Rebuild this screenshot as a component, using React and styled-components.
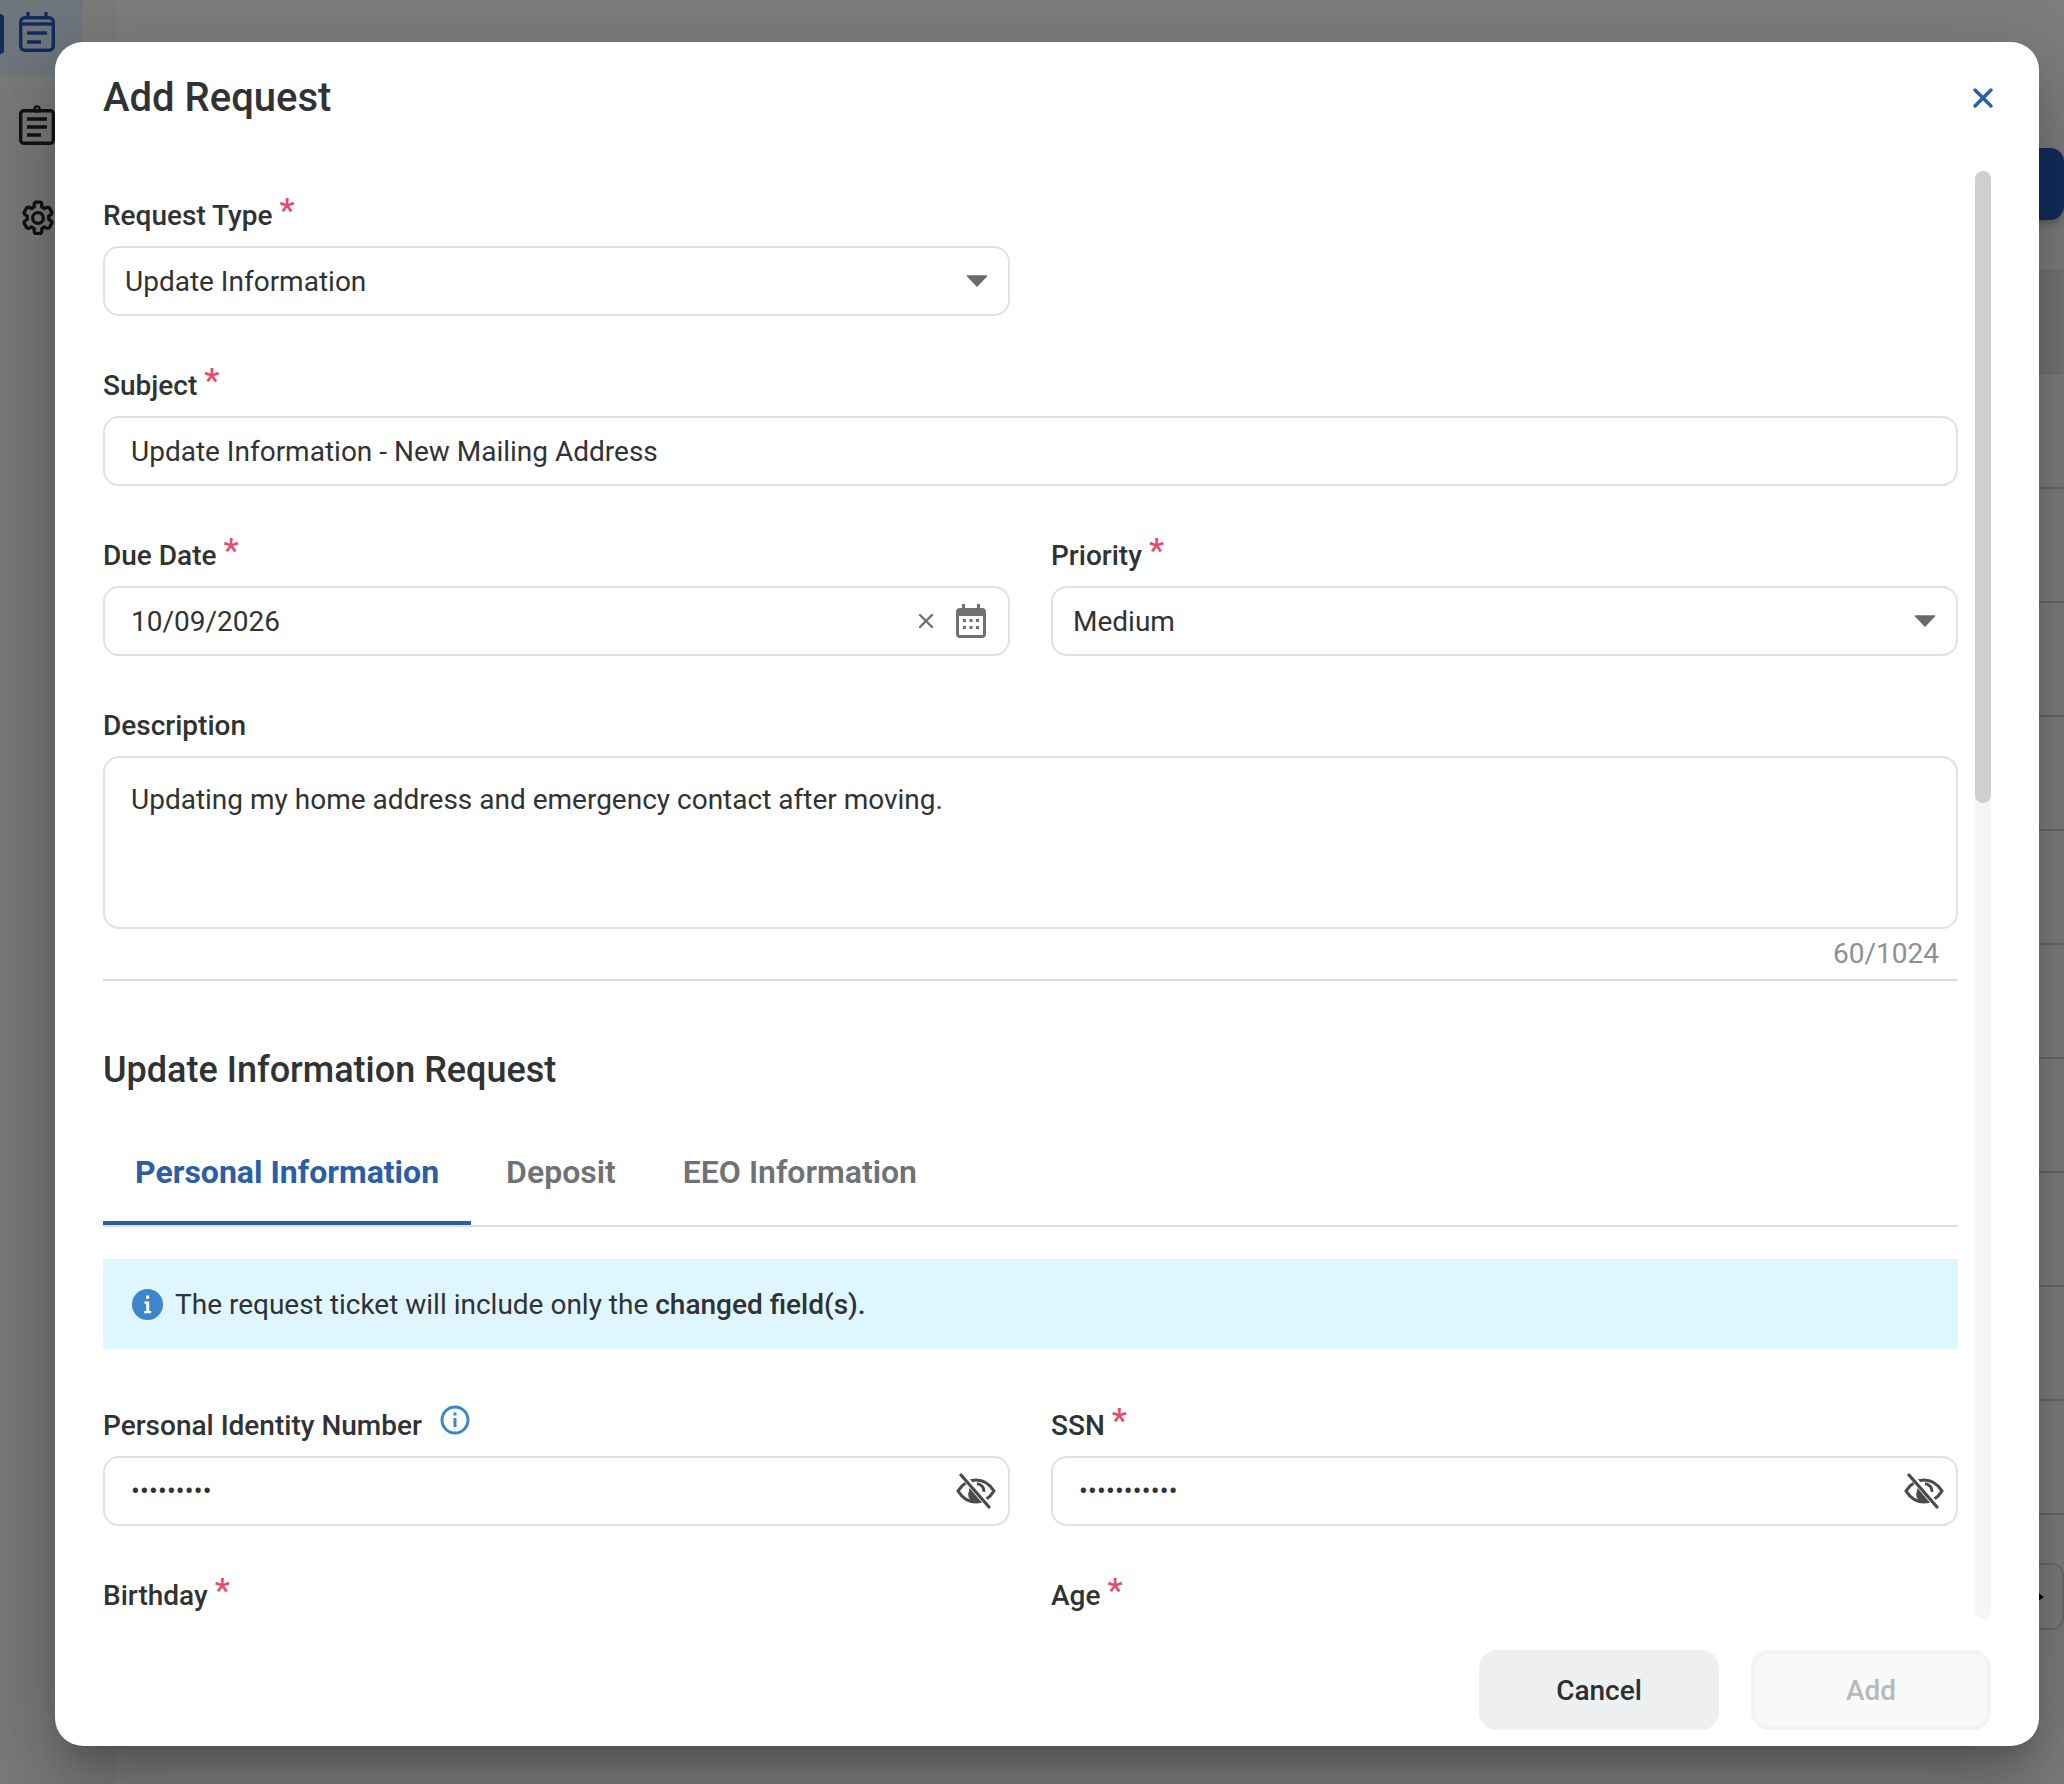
import React from 'react';
import styled, { createGlobalStyle } from 'styled-components';
import { X } from 'lucide-react';

const Global = createGlobalStyle`
  html, body { margin: 0; padding: 0; background: #fff; }
  * { box-sizing: border-box; }
  body { font-family: Roboto, "Liberation Sans", sans-serif; color: #303234; }
`;

const Page = styled.div`
  position: relative; display: flex; width: 2064px; height: 1784px; overflow: hidden; background: #fbfdfc;
`;
const Sidebar = styled.nav`
  width: 116px; flex: none; background: #f7f7f7; display: flex; flex-direction: column; gap: 5px; margin-top: -12px;
`;
const NavItem = styled.div`
  position: relative; width: 83px; height: 88px; display: flex; align-items: center; padding-left: 19px;
  background: ${p => (p.$active ? '#deedfb' : 'transparent')};
  color: ${p => (p.$active ? '#2659b8' : '#262626')};
  &::before {
    content: ''; display: ${p => (p.$active ? 'block' : 'none')}; position: absolute; left: -4px; top: 26px;
    width: 8px; height: 40px; border-radius: 4px; background: #2659b8;
  }
`;
const Main = styled.main`flex: 1; display: flex; flex-direction: column; min-width: 0;`;
const Toolbar = styled.div`height: 269px; padding-top: 148px; display: flex; justify-content: flex-end;`;
const NewButton = styled.div`width: 300px; height: 72px; border-radius: 14px; background: #285abb; box-shadow: 0 4px 8px rgba(0,0,0,.25);`;
const TableHead = styled.div`height: 106px; background: #ebedee;`;
const Row = styled.div`height: 114px; border-bottom: 2px solid #d4d4d4; background: #fff;`;
const Pager = styled.div`
  margin-top: 48px; align-self: flex-end; width: 240px; height: 67px; border: 2px solid #d8d8d8; border-radius: 12px;
  display: flex; align-items: center; justify-content: flex-end; padding-right: 18px;
`;
const PagerArrow = styled.span`
  width: 0; height: 0; border-left: 14px solid #111; border-top: 10px solid transparent; border-bottom: 10px solid transparent;
`;

const Overlay = styled.div`
  position: absolute; inset: 0; background: rgba(0,0,0,.5); display: flex; padding: 42px 25px 38px 55px;
`;
const Modal = styled.section`
  flex: 1; min-width: 0; display: flex; flex-direction: column; background: #fff; border-radius: 28px;
  box-shadow: 0 22px 30px -14px rgba(0,0,0,.2), 0 48px 76px 6px rgba(0,0,0,.14), 0 18px 92px 16px rgba(0,0,0,.12);
`;
const Header = styled.header`
  height: 129px; flex: none; display: flex; justify-content: space-between; align-items: flex-start; padding: 32px 40px 0 48px;
`;
const Title = styled.h1`margin: 0; font-size: 40px; line-height: 47px; font-weight: 500; color: #303234;`;
const CloseButton = styled.div`width: 32px; height: 47px; display: flex; align-items: center; justify-content: center; color: #2a5ea7;`;

const Body = styled.div`flex: 1; min-height: 0; display: flex; gap: 17px; padding: 0 48px;`;
const Content = styled.div`flex: 1; min-width: 0; overflow: hidden; padding-top: 25px;`;
const Track = styled.div`width: 16px; flex: none; border-radius: 8px; background: #f5f5f6;`;
const Thumb = styled.div`height: 632px; border-radius: 8px; background: #cfcfcf;`;

const Grid = styled.div`display: grid; grid-template-columns: 907px 907px; column-gap: 41px;`;
const Field = styled.div`margin-bottom: ${p => p.$mb ?? 50}px;`;
const LabelRow = styled.div`display: flex; height: 40px; margin-bottom: 10px; align-items: center;`;
const LabelText = styled.label`font-size: 28px; line-height: 40px; font-weight: 500; color: #303234;`;
const Req = styled.span`
  font-size: 34px; line-height: 34px; font-weight: 500; color: #e84a6d; margin-left: 7px; align-self: flex-start; margin-top: -3px;
`;
const InfoWrap = styled.span`margin-left: 18px; display: flex; margin-top: -12px; color: #3c86c9;`;

const Box = styled.div`
  display: flex; align-items: center; justify-content: space-between; height: 70px; border: 2px solid #e0e0e6; border-radius: 16px;
  background: #fff; padding: 0 ${p => p.$pr ?? 20}px 0 ${p => p.$pl ?? 26}px; font-size: 28px; color: #303234;
`;
const Area = styled.div`
  height: 173px; border: 2px solid #e0e0e6; border-radius: 16px; padding: 22px 26px; font-size: 28px; line-height: 40px; color: #303234;
`;
const Counter = styled.div`
  height: 40px; margin-top: 5px; padding-right: 19px; text-align: right; font-size: 28px; line-height: 40px; color: #8d9094;
`;
const Divider = styled.hr`margin: 5px 0 0; border: 0; height: 2px; background: #dcdcdc;`;
const Section = styled.h2`margin: 67px 0 35px; font-size: 36px; line-height: 44px; font-weight: 500; color: #303234;`;
const Tabs = styled.div`display: flex; gap: 3px; border-bottom: 2px solid #dedede; height: 100px;`;
const Tab = styled.div`
  height: 98px; padding: 0 32px 4px; display: flex; align-items: center; font-size: 32px; font-weight: ${p => (p.$active ? 700 : 600)};
  color: ${p => (p.$active ? '#2a5ea7' : '#6f7175')}; border-bottom: 4px solid ${p => (p.$active ? '#2a5ea7' : 'transparent')};
`;
const Banner = styled.div`
  margin: 32px 0 57px; height: 90px; background: #dff6fe; display: flex; align-items: center; gap: 12px; padding-left: 29px;
  font-size: 28px; color: #303234;
  & b { font-weight: 500; }
`;
const Dots = styled.span`font-size: 26px; letter-spacing: 0.2px; color: #303234;`;

const Footer = styled.footer`display: flex; justify-content: flex-end; gap: 32px; padding: 32px 48px 16px; flex: none;`;
const Button = styled.button`
  width: 240px; height: 80px; border-radius: 18px; font: 500 28px Roboto, sans-serif;
  background: ${p => (p.$disabled ? '#f8f9f9' : '#eeeff1')};
  color: ${p => (p.$disabled ? '#b9b9b9' : '#2d2f31')};
  border: ${p => (p.$disabled ? '4px solid #f2f3f3' : '0')};
`;

const Caret = () => (
  <svg width="22" height="12" viewBox="0 0 22 12"><path d="M1.5 1h19L11 11z" fill="#6a6a6a" stroke="#6a6a6a" strokeWidth="1.5" strokeLinejoin="round" /></svg>
);
const CalendarDoc = () => (
  <svg width="36" height="40" viewBox="0 0 36 40" fill="none" stroke="currentColor" strokeWidth="3.4" style={{ flex: 'none' }}>
    <path d="M9 0v7M27 0v7" />
    <rect x="1.7" y="5.7" width="32.6" height="32.6" rx="4" />
    <path d="M2 12h32" />
    <path d="M8 21h20M8 30h14" />
  </svg>
);
const ClipboardDoc = () => (
  <svg width="36" height="40" viewBox="0 0 36 40" fill="none" stroke="currentColor" strokeWidth="3.4" style={{ flex: 'none' }}>
    <rect x="1.7" y="5.7" width="32.6" height="32.6" rx="3" />
    <circle cx="18" cy="4" r="2.6" strokeWidth="2.4" />
    <path d="M8 14h20M8 22h20M8 30h14" />
  </svg>
);
const Gear = () => (
  <svg width="40" height="40" viewBox="0 0 24 24" fill="none" stroke="currentColor" strokeWidth="2" strokeLinejoin="round" style={{ flex: 'none', marginLeft: -1 }}>
    <path d="M9.67 4.14a2 2 0 0 1 .64-1.64h3.38a2 2 0 0 1 .64 1.64l-.1 1.2 1.63.94 1.09-.52a2 2 0 0 1 1.77.05l1.69 2.93a2 2 0 0 1-.97 1.48l-.99.69v1.88l.99.69a2 2 0 0 1 .97 1.48l-1.69 2.93a2 2 0 0 1-1.77.05l-1.09-.52-1.63.94.1 1.2a2 2 0 0 1-.64 1.64h-3.38a2 2 0 0 1-.64-1.64l.1-1.2-1.63-.94-1.09.52a2 2 0 0 1-1.77-.05l-1.69-2.93a2 2 0 0 1 .97-1.48l.99-.69v-1.88l-.99-.69a2 2 0 0 1-.97-1.48l1.69-2.93a2 2 0 0 1 1.77-.05l1.09.52 1.63-.94z" />
    <circle cx="12" cy="12" r="3.2" />
  </svg>
);
const DateIcon = () => (
  <svg width="30" height="34" viewBox="0 0 30 34" fill="#717171" style={{ display: 'block' }}>
    <path d="M6 0h3v4h12V0h3v4h2a4 4 0 0 1 4 4v22a4 4 0 0 1-4 4H4a4 4 0 0 1-4-4V8a4 4 0 0 1 4-4h2zM3 12v18a1 1 0 0 0 1 1h22a1 1 0 0 0 1-1V12z" />
    <path d="M7 15h3v3H7zM13.500 15h3v3h-3zM20 15h3v3h-3zM7 22h3v3H7zM13.500 22h3v3h-3zM20 22h3v3h-3z" />
  </svg>
);
const EyeOff = () => (
  <svg width="40" height="36" viewBox="0 0 40 36" fill="none" style={{ display: 'block' }}>
    <path d="M2 18C7 10 13 7 20 7s13 3 18 11c-5 8-11 11-18 11S7 26 2 18z" stroke="#4a4b4d" strokeWidth="3.2" strokeLinejoin="round" />
    <path d="M13 18a7.500 7.500 0 0 1 3-6l11 13a7.500 7.500 0 0 1-14-7z" fill="#4a4b4d" />
    <path d="M21 10.800a7.500 7.500 0 0 1 7 8" stroke="#4a4b4d" strokeWidth="3" />
    <path d="M6 1.500l28 33" stroke="#fff" strokeWidth="6" />
    <path d="M5 2l28 32" stroke="#4a4b4d" strokeWidth="3.200" strokeLinecap="round" />
  </svg>
);
const InfoOutline = () => (
  <svg width="30" height="30" viewBox="0 0 30 30" fill="none" style={{ display: 'block' }}>
    <circle cx="15" cy="15" r="13" stroke="currentColor" strokeWidth="3" />
    <rect x="13.500" y="13" width="3" height="9" fill="currentColor" />
    <rect x="13.500" y="7.500" width="3" height="3" fill="currentColor" />
  </svg>
);
const InfoFilled = () => (
  <svg width="31" height="31" viewBox="0 0 31 31" style={{ display: 'block', flex: 'none' }}>
    <circle cx="15.500" cy="15.500" r="15.500" fill="#3c86c9" />
    <path d="M14 6.500h3.200v3.200H14zM12.500 12.500h4.700v9.500h2v2.200h-7V22h2v-7.300h-1.700z" fill="#fff" />
  </svg>
);

const Label = ({ text, required, info }) => (
  <LabelRow>
    <LabelText>{text}</LabelText>
    {required && <Req>*</Req>}
    {info && <InfoWrap><InfoOutline /></InfoWrap>}
  </LabelRow>
);

export default function App() {
  return (
    <>
      <Global />
      <Page>
        <Sidebar>
          <NavItem $active><CalendarDoc /></NavItem>
          <NavItem><ClipboardDoc /></NavItem>
          <NavItem><Gear /></NavItem>
        </Sidebar>
        <Main>
          <Toolbar><NewButton /></Toolbar>
          <TableHead />
          {Array.from({ length: 10 }, (_, i) => <Row key={i} />)}
          <Pager><PagerArrow /></Pager>
        </Main>
        <Overlay>
          <Modal>
            <Header>
              <Title>Add Request</Title>
              <CloseButton><X size={34} strokeWidth={2.6} /></CloseButton>
            </Header>
            <Body>
              <Content>
                <Grid>
                  <Field>
                    <Label text="Request Type" required />
                    <Box $pl={20}>Update Information<Caret /></Box>
                  </Field>
                </Grid>
                <Field>
                  <Label text="Subject" required />
                  <Box>Update Information - New Mailing Address</Box>
                </Field>
                <Grid>
                  <Field>
                    <Label text="Due Date" required />
                    <Box $pr={22}>
                      10/09/2026
                      <svg width="0" height="0" style={{ marginLeft: 'auto' }} />
                      <X size={24} color="#717171" strokeWidth={2.4} style={{ marginRight: 18 }} />
                      <DateIcon />
                    </Box>
                  </Field>
                  <Field>
                    <Label text="Priority" required />
                    <Box $pl={20}>Medium<Caret /></Box>
                  </Field>
                </Grid>
                <Field $mb={0}>
                  <Label text="Description" />
                  <Area>Updating my home address and emergency contact after moving.</Area>
                  <Counter>60/1024</Counter>
                </Field>
                <Divider />
                <Section>Update Information Request</Section>
                <Tabs>
                  <Tab $active>Personal Information</Tab>
                  <Tab>Deposit</Tab>
                  <Tab>EEO Information</Tab>
                </Tabs>
                <Banner>
                  <InfoFilled />
                  <span>The request ticket will include only the <b>changed field(s).</b></span>
                </Banner>
                <Grid>
                  <Field>
                    <Label text="Personal Identity Number" info />
                    <Box $pr={12}><Dots>•••••••••</Dots><EyeOff /></Box>
                  </Field>
                  <Field>
                    <Label text="SSN" required />
                    <Box $pr={12}><Dots>•••••••••••</Dots><EyeOff /></Box>
                  </Field>
                  <Field $mb={0}><Label text="Birthday" required /></Field>
                  <Field $mb={0}><Label text="Age" required /></Field>
                </Grid>
              </Content>
              <Track><Thumb /></Track>
            </Body>
            <Footer>
              <Button>Cancel</Button>
              <Button $disabled>Add</Button>
            </Footer>
          </Modal>
        </Overlay>
      </Page>
    </>
  );
}
